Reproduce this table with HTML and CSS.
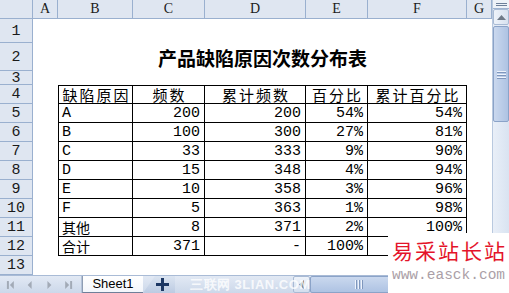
FILE: index.html
```html
<!DOCTYPE html>
<html lang="zh">
<head>
<meta charset="utf-8">
<title>产品缺陷原因次数分布表</title>
<link rel="stylesheet" href="styles.css">
</head>
<body>
<div class="app">
  <div class="main">
    <div class="sheet">
      <div class="hd corner"></div>
      <div class="hd ch">A</div>
      <div class="hd ch">B</div>
      <div class="hd ch">C</div>
      <div class="hd ch">D</div>
      <div class="hd ch">E</div>
      <div class="hd ch">F</div>
      <div class="hd ch">G</div>

      <div class="hd rh">1</div><div class="blank span7"></div>
      <div class="hd rh">2</div><div class="blank"></div><div class="title">产品缺陷原因次数分布表</div><div class="blank"></div>
      <div class="hd rh">3</div><div class="blank span7"></div>

      <div class="hd rh">4</div><div class="blank"></div>
      <div class="c l t h">缺陷原因</div><div class="c t h">频数</div><div class="c t h">累计频数</div><div class="c t h">百分比</div><div class="c t h">累计百分比</div>
      <div class="blank"></div>

      <div class="hd rh">5</div><div class="blank"></div>
      <div class="c l">A</div><div class="c r">200</div><div class="c r">200</div><div class="c r">54%</div><div class="c r">54%</div>
      <div class="blank"></div>

      <div class="hd rh">6</div><div class="blank"></div>
      <div class="c l">B</div><div class="c r">100</div><div class="c r">300</div><div class="c r">27%</div><div class="c r">81%</div>
      <div class="blank"></div>

      <div class="hd rh">7</div><div class="blank"></div>
      <div class="c l">C</div><div class="c r">33</div><div class="c r">333</div><div class="c r">9%</div><div class="c r">90%</div>
      <div class="blank"></div>

      <div class="hd rh">8</div><div class="blank"></div>
      <div class="c l">D</div><div class="c r">15</div><div class="c r">348</div><div class="c r">4%</div><div class="c r">94%</div>
      <div class="blank"></div>

      <div class="hd rh">9</div><div class="blank"></div>
      <div class="c l">E</div><div class="c r">10</div><div class="c r">358</div><div class="c r">3%</div><div class="c r">96%</div>
      <div class="blank"></div>

      <div class="hd rh">10</div><div class="blank"></div>
      <div class="c l">F</div><div class="c r">5</div><div class="c r">363</div><div class="c r">1%</div><div class="c r">98%</div>
      <div class="blank"></div>

      <div class="hd rh">11</div><div class="blank"></div>
      <div class="c l cjk">其他</div><div class="c r">8</div><div class="c r">371</div><div class="c r">2%</div><div class="c r">100%</div>
      <div class="blank"></div>

      <div class="hd rh">12</div><div class="blank"></div>
      <div class="c l cjk">合计</div><div class="c r">371</div><div class="c r">-</div><div class="c r">100%</div><div class="c r"></div>
      <div class="blank"></div>

      <div class="hd rh">13</div><div class="blank span7"></div>
    </div>

    <div class="vscroll">
      <div class="split"><span class="split-line"></span></div>
      <div class="vbtn"><svg width="9" height="5" viewBox="0 0 9 5"><path d="M0 5 L4.5 0 L9 5 Z" fill="#6f7a88"/></svg></div>
      <div class="vthumb"><span class="grip"></span><span class="grip"></span><span class="grip"></span></div>
      <div class="vtrack"></div>
    </div>
  </div>

  <div class="tabbar">
    <div class="nav">
      <svg width="82" height="17" viewBox="0 0 82 17">
        <g fill="#a2aab6">
          <rect x="7" y="5" width="2" height="8"/>
          <path d="M14 5 L10 9 L14 13 Z"/>
          <path d="M32 5 L28 9 L32 13 Z"/>
          <path d="M48 5 L52 9 L48 13 Z"/>
          <path d="M66 5 L70 9 L66 13 Z"/>
          <rect x="71" y="5" width="2" height="8"/>
        </g>
      </svg>
    </div>
    <div class="tab">Sheet1</div>
    <div class="newtab">
      <svg width="13" height="13" viewBox="0 0 13 13"><path d="M5 0 H8 V5 H13 V8 H8 V13 H5 V8 H0 V5 H5 Z" fill="#1d3864"/></svg>
    </div>
    <div class="spacer"></div>
    <div class="hbtn"><svg width="5" height="9" viewBox="0 0 5 9"><path d="M5 0 L0 4.5 L5 9 Z" fill="#6f7a88"/></svg></div>
    <div class="hthumb"><span class="hgrip"></span><span class="hgrip"></span><span class="hgrip"></span></div>
  </div>

  <div class="wm-lian">三联网 3LIAN.COM</div>
  <div class="wm-easck">
    <div class="wm-cn">易采站长站</div>
    <div class="wm-url">www.easck.com</div>
  </div>
</div>
</body>
</html>
```

FILE: styles.css
```css
* { box-sizing: border-box; margin: 0; padding: 0; }
body { margin: 0; width: 509px; height: 293px; overflow: hidden; background: #fff; font-family: "Liberation Sans", sans-serif; }

.app { position: relative; width: 509px; height: 293px; display: flex; flex-direction: column; }
.main { display: flex; height: 275px; }

.sheet {
  display: grid;
  grid-template-columns: 33px 25px 75px 72px 101px 62px 99px 25px;
  grid-template-rows: 19px 24px 28px 14px repeat(10, 19px);
  width: 492px;
  background: #fff;
}

.hd {
  background: #dfe6f1;
  border-right: 1px solid #9ab0cf;
  border-bottom: 1px solid #9ab0cf;
  display: flex;
  align-items: center;
  justify-content: center;
  color: #1a1a1a;
  line-height: 1;
}
.ch { font-family: "Liberation Serif", serif; font-size: 14px; }
.rh { font-family: "Liberation Mono", monospace; font-size: 15px; padding-top: 1px; }

.span7 { grid-column: span 7; }

.title {
  grid-column: span 5;
  display: flex;
  align-items: center;
  justify-content: center;
  font-family: "Noto Sans CJK SC", sans-serif;
  font-weight: 700;
  font-size: 19px;
  line-height: 1;
  color: #000;
  padding-top: 1px;
}

.c {
  border-right: 1px solid #000;
  border-bottom: 1px solid #000;
  display: flex;
  align-items: center;
  font-family: "Liberation Mono", monospace;
  font-size: 15px;
  line-height: 1;
  color: #000;
  padding: 0 3px;
  white-space: nowrap;
}
.c.l { border-left: 1px solid #000; }
.c.t { border-top: 1px solid #000; }
.c.h { justify-content: center; font-family: "Noto Sans CJK SC", sans-serif; font-size: 15px; line-height: 15px; letter-spacing: 2px; padding: 0 0 0 2px; }
.c.r { justify-content: flex-end; padding-right: 4px; }
.c.cjk { font-family: "Noto Sans CJK SC", sans-serif; font-size: 14px; line-height: 14px; }

/* vertical scrollbar */
.vscroll { width: 17px; display: flex; flex-direction: column; background: #e4ebf5; border-left: 1px solid #b9c9df; }
.split { height: 9px; display: flex; align-items: center; justify-content: center; background: #eef2f8; border-bottom: 1px solid #9fb3d0; }
.split-line { width: 11px; height: 3px; border-top: 1px solid #6d7f99; border-bottom: 1px solid #6d7f99; }
.vbtn { height: 16px; display: flex; align-items: center; justify-content: center; background: linear-gradient(90deg, #eef3fa, #d7e1ef); border: 1px solid #a8bad4; border-radius: 2px; margin: 0 0 1px; }
.vthumb { height: 96px; display: flex; flex-direction: column; align-items: center; justify-content: center; gap: 2px; background: linear-gradient(90deg, #cad8ee, #aec3e3); border: 1px solid #8ba3c8; border-radius: 2px; }
.grip { width: 9px; height: 1px; background: #eef3fb; box-shadow: 0 1px 0 #7f97bd; }
.vtrack { flex: 1; background: linear-gradient(90deg, #e9eff8, #d9e3f1); }

/* tab bar */
.tabbar { height: 18px; display: flex; background: linear-gradient(#e2e9f4, #ccd8ea); border-top: 1px solid #a9bbd6; }
.nav { width: 82px; display: flex; align-items: center; border-right: 1px solid #b4c3d9; }
.tab { width: 61px; display: flex; align-items: center; justify-content: center; background: linear-gradient(#ffffff, #f3f6fb); border-left: 1px solid #8e9db3; border-bottom: 1px solid #6f7f99; font-family: "Liberation Sans", sans-serif; font-size: 13px; color: #000; padding-bottom: 1px; }
.newtab { width: 32px; display: flex; align-items: center; justify-content: flex-end; padding-right: 6px; background: linear-gradient(#dbe4f1, #bccbe2); clip-path: polygon(12px 0, 100% 0, 100% 100%, 0 100%); }
.spacer { width: 118px; }
.hbtn { width: 17px; display: flex; align-items: center; justify-content: center; background: linear-gradient(#eef3fa, #d3deee); border: 1px solid #a8bad4; border-radius: 2px; }
.hthumb { flex: 1; display: flex; align-items: center; gap: 2px; padding-left: 44px; background: linear-gradient(#cad8ee, #aec3e3); border: 1px solid #8ba3c8; border-radius: 2px; }
.hgrip { width: 1px; height: 9px; background: #eef3fb; box-shadow: 1px 0 0 #7f97bd; }

/* watermarks (overlay) */
.wm-lian { position: absolute; left: 190px; top: 276px; font-family: "Liberation Sans", sans-serif; font-weight: 700; font-size: 13px; color: rgba(255, 255, 255, 0.8); letter-spacing: 0.5px; white-space: nowrap; }
.wm-easck { position: absolute; left: 388px; top: 233px; width: 121px; height: 60px; background: #fff; display: flex; flex-direction: column; align-items: center; padding-top: 4px; }
.wm-cn { font-family: "Noto Sans CJK SC", sans-serif; font-size: 21px; line-height: 26px; letter-spacing: 2px; color: #e4142a; padding-left: 2px; }
.wm-url { font-family: "Liberation Mono", monospace; font-size: 14.5px; line-height: 20px; color: #ab9fa7; margin-top: 2px; }
```
